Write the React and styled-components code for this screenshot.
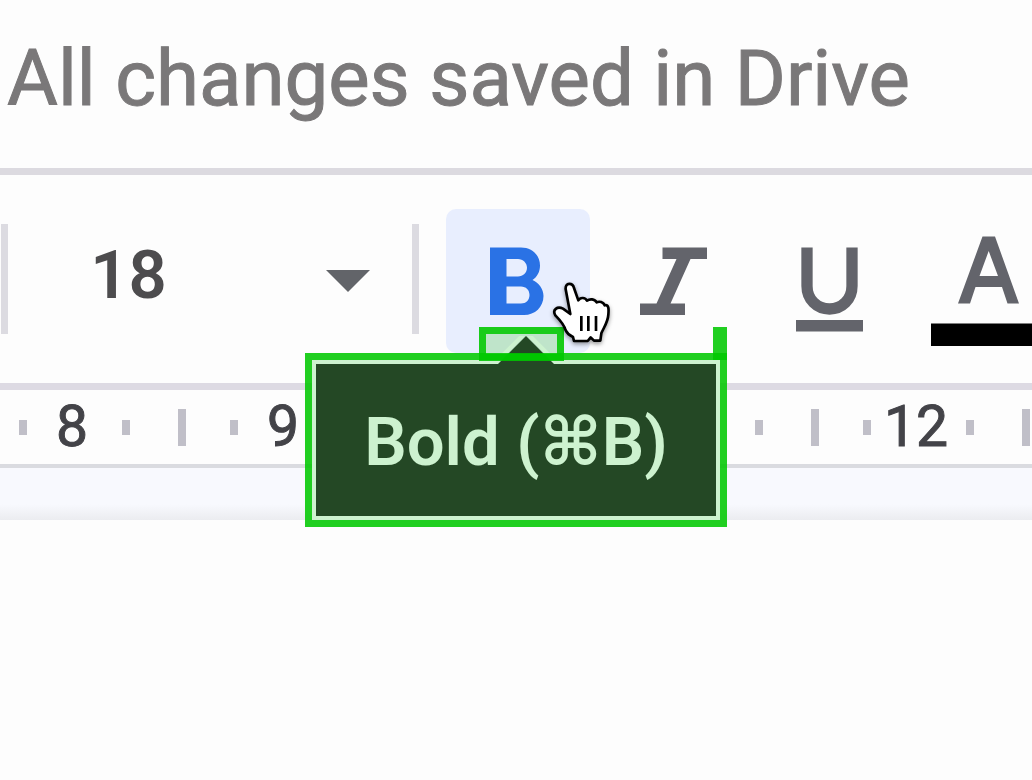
import React from 'react';
import styled, { createGlobalStyle } from 'styled-components';

/* The bubble covers two numbers, so their cells only keep the ticks. */
const RULER_MARKS = [
  { id: 'a', label: '8' },
  { id: 'b', label: '9' },
  { id: 'c' },
  { id: 'd' },
  { id: 'e', label: '12' },
];

const App = () => {
  return (
    <Wrapper>
      <GlobalStyle />
      <Header>
        <SaveStatus>All changes saved in Drive</SaveStatus>
      </Header>
      <Toolbar>
        <Divider />
        <SizeInput aria-label="Font size" defaultValue="18" />
        <CaretButton aria-label="Font size list">
          <svg width="44" height="22" viewBox="0 0 44 22">
            <path d="M0 0H44L22 22Z" fill="currentColor" />
          </svg>
        </CaretButton>
        <Divider />
        <FormatGroup>
          <ButtonWrapper>
            <FormatButton $active aria-label="Bold" aria-describedby="bold-tip">
              <BoldIcon />
            </FormatButton>
            <BoldTooltip />
            <HandPointer />
          </ButtonWrapper>
          <FormatButton aria-label="Italic">
            <ItalicIcon />
          </FormatButton>
          <FormatButton aria-label="Underline">
            <UnderlineIcon />
          </FormatButton>
          <FormatButton aria-label="Text color">
            <TextColorIcon />
          </FormatButton>
        </FormatGroup>
      </Toolbar>
      <Ruler>
        {RULER_MARKS.map(({ id, label }) => (
          <RulerCell key={id}>
            <Tick />
            <RulerNumber>{label}</RulerNumber>
            <Tick />
            <Tick $tall />
          </RulerCell>
        ))}
      </Ruler>
      <Backdrop />
      <Page />
    </Wrapper>
  );
};

const BoldTooltip = () => (
  <Tooltip>
    <Bubble id="bold-tip" role="tooltip">
      Bold (⌘B)
    </Bubble>
    <ArrowFill />
    <Arrow width="56" height="28" viewBox="0 0 56 28">
      <path d="M-4 28L28 -4L60 28" fill="none" stroke="#cdf2cf" strokeWidth="4" />
      <path d="M0 28L28 0L56 28Z" fill="#244825" />
    </Arrow>
    <Outline />
    <ArrowOutline />
    <Stub />
  </Tooltip>
);

const BoldIcon = () => (
  <svg width="144" height="144" viewBox="0 0 144 144">
    <path
      fillRule="evenodd"
      fill="currentColor"
      d="M44 38.500H75C86 38.500 94 46 94 56.500C94 63 91 68 86.500 71C93 74 97.500 80 97.500 87C97.500 98 89 106 78 106H44ZM60.500 50V67.500H72C77 67.500 81 63.500 81 58.700C81 54 77 50 72 50ZM60.500 77.500V94.500H75C80 94.500 83.500 91 83.500 86C83.500 81 80 77.500 75 77.500Z"
    />
  </svg>
);

const ItalicIcon = () => (
  <svg width="144" height="144" viewBox="0 0 144 144">
    <path
      fill="currentColor"
      d="M60.500 38.500H105V50H88.500L68.500 94.500H83V106H38V94.500H54.500L74.500 50H60.500Z"
    />
  </svg>
);

const UnderlineIcon = () => (
  <svg width="144" height="144" viewBox="0 0 144 144">
    <path
      fill="none"
      stroke="currentColor"
      strokeWidth="11.300"
      d="M49 38.500V77C49 90.500 59 100 71.500 100S94 90.500 94 77V38.500"
    />
    <path fill="currentColor" d="M38 111H105V122.500H38Z" />
  </svg>
);

const TextColorIcon = () => (
  <svg width="144" height="144" viewBox="0 0 144 144">
    <path
      fill="currentColor"
      fillRule="evenodd"
      d="M68.500 27.500H81L105 94.500H93.500L88 78H61.500L56 94.500H44ZM65.500 67H84L74.700 42Z"
    />
    <path fill="#000" d="M17 114.500H131V137H17Z" />
  </svg>
);

const HandPointer = () => (
  <Pointer width="80" height="80" viewBox="0 0 240 240">
    <path
      fill="#fff"
      stroke="#000"
      strokeWidth="8"
      strokeLinejoin="round"
      d="M77 58C75 36 98 38 102 54L115 91C121 81 136 82 141 92C149 86 164 86 170 97C178 93 190 96 194 106C208 102 206 122 205 134C204 156 192 171 184 190L181 212H162L152 202L143 213H102L99 201C88 196 81 189 77 181C73 167 59 149 46 136C36 119 52 108 69 116L91 132Z"
    />
    <path
      fill="none"
      stroke="#000"
      strokeWidth="8"
      d="M124 138V183M145 138V183M168 138V183"
    />
  </Pointer>
);

const GlobalStyle = createGlobalStyle`
  *,
  *::before,
  *::after {
    box-sizing: border-box;
  }

  body {
    margin: 0;
    background: #fdfdfd;
    font-family: Roboto, 'Liberation Sans', sans-serif;
  }

  button,
  input {
    margin: 0;
    padding: 0;
    border: none;
    background: none;
    font: inherit;
  }

  svg {
    display: block;
  }
`;

const Wrapper = styled.div`
  display: flex;
  flex-direction: column;
  min-height: 100vh;
  overflow: hidden;
`;

const Header = styled.header`
  padding: 31px 7px 41px;
  border-bottom: 7px solid #dcdae0;
`;

const SaveStatus = styled.p`
  margin: 0;
  font-size: 78px;
  line-height: 96px;
  color: #7a7879;
  white-space: nowrap;
  -webkit-text-stroke: 1px currentColor;
`;

const Toolbar = styled.div`
  display: flex;
  align-items: center;
  padding: 34px 0 30px 1px;
  border-bottom: 7px solid #dddae3;
`;

const Divider = styled.div`
  flex: none;
  width: 7px;
  height: 110px;
  margin-bottom: 4px;
  background: #dcdbe1;
`;

const SizeInput = styled.input`
  flex: none;
  width: 275px;
  height: 96px;
  padding-right: 34px;
  margin-bottom: 12px;
  font-size: 67px;
  font-weight: 600;
  text-align: center;
  color: #4d4c4e;
`;

const CaretButton = styled.button`
  flex: none;
  display: grid;
  place-items: center;
  width: 129px;
  height: 144px;
  color: #626469;
`;

const FormatGroup = styled.div`
  display: flex;
  gap: 12px;
  margin-left: 27px;
`;

const ButtonWrapper = styled.div`
  position: relative;
`;

const FormatButton = styled.button`
  flex: none;
  display: block;
  border-radius: 10px;
  color: ${(p) => (p.$active ? '#2a72e5' : '#63646b')};
  background: ${(p) => (p.$active ? '#e8eefe' : 'transparent')};
`;

/* Hangs below the active button, on top of the ruler. */
const Tooltip = styled.div`
  position: absolute;
  z-index: 1;
  top: 144px;
  left: -141px;
  padding: 7px;
`;

const Bubble = styled.div`
  width: 408px;
  padding-top: 4px;
  border: 4px solid #cdf2cf;
  background: #244825;
  color: #cdf2cf;
  font-family: Roboto, 'DejaVu Sans', sans-serif;
  font-size: 67px;
  font-weight: 600;
  line-height: 148px;
  text-align: center;
  white-space: nowrap;
`;

const ArrowFill = styled.div`
  position: absolute;
  top: -26px;
  left: 174px;
  width: 85px;
  height: 34px;
  background: #bfe4ca;
`;

const Arrow = styled.svg`
  position: absolute;
  top: -17px;
  left: 193px;
`;

const Outline = styled.div`
  position: absolute;
  inset: 0;
  border: 7px solid rgba(0, 200, 0, 0.87);
`;

const ArrowOutline = styled.div`
  position: absolute;
  top: -26px;
  left: 174px;
  width: 85px;
  height: 34px;
  border: 7px solid rgba(0, 200, 0, 0.87);
`;

const Stub = styled.div`
  position: absolute;
  top: -26px;
  right: 0;
  width: 14px;
  height: 33px;
  background: rgba(0, 200, 0, 0.87);
`;

const Pointer = styled.svg`
  position: absolute;
  z-index: 2;
  top: 61px;
  left: 94px;
  pointer-events: none;
  filter: drop-shadow(0 2px 2px rgba(0, 0, 0, 0.4));
`;

const Ruler = styled.div`
  display: flex;
  padding-left: 19px;
  border-bottom: 4px solid #dadbe0;
`;

const RulerCell = styled.div`
  flex: none;
  display: grid;
  grid-template-columns: 8px 95px 56px 52px;
  align-items: center;
  width: 211px;
  height: 74px;
`;

const Tick = styled.span`
  width: 8px;
  height: ${(p) => (p.$tall ? '37px' : '15px')};
  background: #c0bfc8;
`;

const RulerNumber = styled.span`
  padding-right: 5px;
  font-size: 57px;
  line-height: 74px;
  text-align: center;
  color: #434348;
  -webkit-text-stroke: 1px currentColor;
`;

const Backdrop = styled.div`
  height: 52px;
  background: linear-gradient(#f8f9fe 70%, #ebecf0);
`;

const Page = styled.main`
  flex: 1;
  background: #fdfdfd;
`;

export default App;
